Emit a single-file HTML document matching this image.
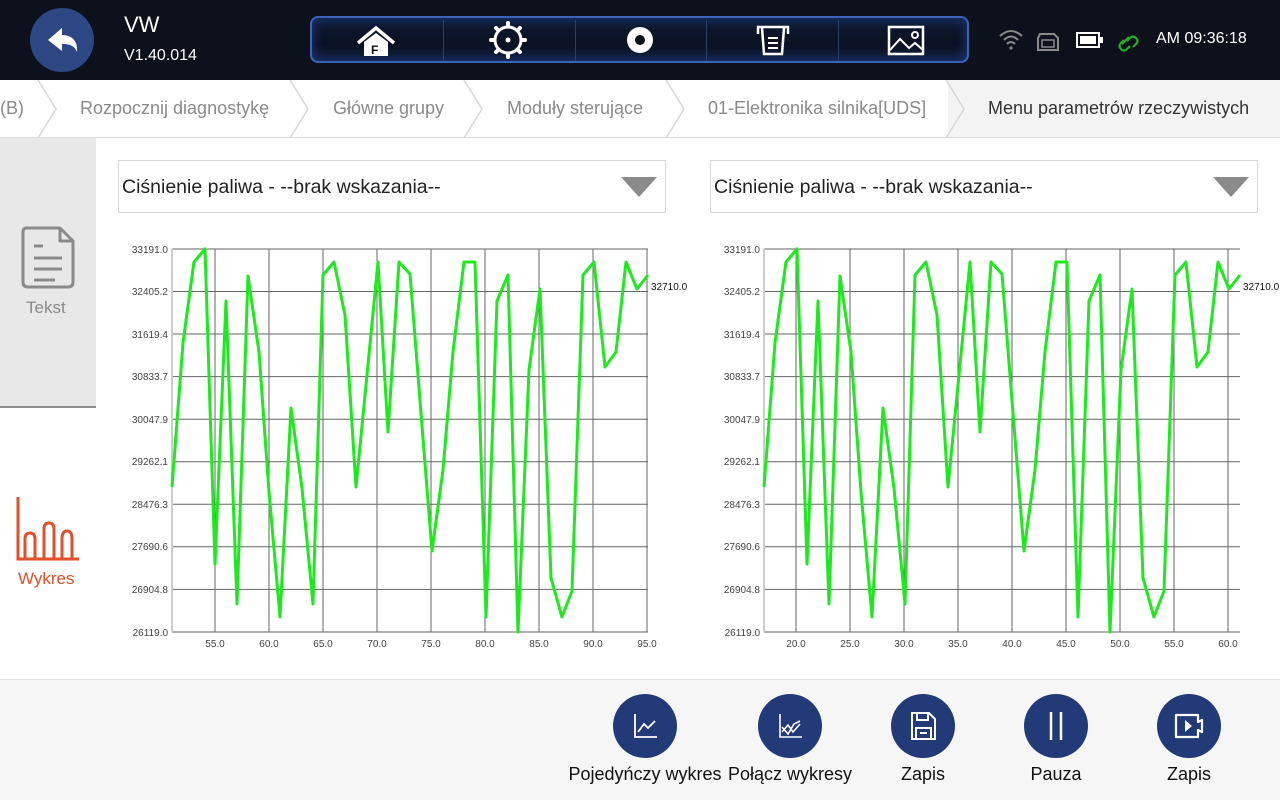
<!DOCTYPE html>
<html><head><meta charset="utf-8"><style>
*{margin:0;padding:0;box-sizing:border-box}
body{width:1280px;height:800px;overflow:hidden;background:#fff;font-family:"Liberation Sans",sans-serif;position:relative}
.hdr{position:absolute;left:0;top:0;width:1280px;height:80px;background:#0c111c}
.back{position:absolute;left:30px;top:8px;width:64px;height:64px;border-radius:50%;background:#2d4785}
.t1{position:absolute;left:124px;top:12px;color:#fff;font-size:22px}
.t2{position:absolute;left:124px;top:47px;color:#fff;font-size:16px}
.nav{position:absolute;left:310px;top:16px;width:659px;height:47px;border:2px solid #3a64b8;border-radius:8px;background:linear-gradient(#0f1a33,#0b1222 60%,#101c38);box-shadow:inset 0 0 12px #1d3b80}
.nav .sep{position:absolute;top:2px;width:1px;height:41px;background:#2c3f66}
.stat{position:absolute;top:30px;color:#fff;font-size:16px;left:1156px}
.bc{position:absolute;left:0;top:80px;width:1280px;height:58px;background:#fff;border-bottom:1px solid #ddd}
.bc span{position:absolute;top:18px;font-size:18px;color:#8a8a8a}
.side1{position:absolute;left:0;top:138px;width:96px;height:270px;background:#e8e8e8;border-bottom:2px solid #8c8c8c}
.dd{position:absolute;top:160px;height:53px;border:1px solid #d8d8d8;background:#fff;font-size:19.5px;color:#222;padding:15px 0 0 3px}
.tri{position:absolute;right:8px;top:16px;width:0;height:0;border-left:18px solid transparent;border-right:18px solid transparent;border-top:20px solid #8a8a8a}
.bot{position:absolute;left:0;top:679px;width:1280px;height:121px;background:#f6f6f6;border-top:1px solid #e0e0e0}
.btn{position:absolute;top:694px;width:64px;height:64px;border-radius:50%;background:#233a78}
.bl{position:absolute;top:764px;font-size:18px;color:#111;text-align:center;width:170px}
</style></head><body>
<div class="hdr">
 <div class="back"><svg width="64" height="64"><path d="M18 32 L32 20 L32 27 C42 27 48 33 47 44 C44 37 39 36 32 36 L32 43 Z" fill="#fff"/></svg></div>
 <div class="t1">VW</div><div class="t2">V1.40.014</div>
 <div class="nav">
  <div class="sep" style="left:131px"></div><div class="sep" style="left:263px"></div><div class="sep" style="left:394px"></div><div class="sep" style="left:526px"></div>
  <svg width="655" height="43" style="position:absolute;left:0;top:0">
   <path d="M46 25 L64 10 L82 25" stroke="#fff" stroke-width="3.5" fill="none"/>
   <path d="M52 24 L64 15 L76 24 L76 38 L52 38 Z" fill="#fff"/>
   <text x="59" y="36" font-size="12" font-weight="bold" fill="#0c111c" font-family="Liberation Sans">F</text>
   <g stroke="#fff" stroke-width="4" stroke-linecap="round">
    <path d="M196 5v3M196 36v3M179 22h3M210 22h3M184 10l2 2M206 32l2 2M184 34l2-2M206 12l2-2"/>
   </g>
   <circle cx="196" cy="22" r="13" fill="none" stroke="#fff" stroke-width="3"/>
   <circle cx="196" cy="22" r="2.5" fill="#fff"/>
   <circle cx="328" cy="22" r="13" fill="#fff"/><circle cx="328" cy="22" r="5" fill="#0c111c"/>
   <path d="M446 16 L446 9 L476 9 L476 16 M450 10 L452 36 L470 36 L472 10" stroke="#fff" stroke-width="2.5" fill="none"/>
   <path d="M456 20 H466 M456 25 H466 M456 30 H466" stroke="#fff" stroke-width="2"/>
   <rect x="577" y="9" width="34" height="27" fill="none" stroke="#fff" stroke-width="2.5"/>
   <path d="M578 32 L588 21 L597 30 L603 25 L611 32" stroke="#fff" stroke-width="2" fill="none"/>
   <circle cx="603" cy="17" r="3" fill="none" stroke="#fff" stroke-width="2"/>
  </svg>
 </div>
 <svg width="150" height="30" style="position:absolute;left:996px;top:26px">
  <path d="M4 10 Q15 0 26 10 M8 14 Q15 7 22 14 M11 18 Q15 14 19 18" stroke="#8a8a8a" stroke-width="2" fill="none"/><circle cx="15" cy="22" r="1.6" fill="#8a8a8a"/>
  <path d="M44 8 L58 8 L62 12 L62 24 L42 24 L42 12 Z" stroke="#8a8a8a" stroke-width="2" fill="none"/><rect x="46" y="14" width="12" height="7" fill="none" stroke="#8a8a8a" stroke-width="1.5"/>
  <rect x="81" y="7" width="22" height="14" fill="none" stroke="#fff" stroke-width="2"/><rect x="84" y="10" width="16" height="8" fill="#fff"/><rect x="104" y="11" width="3" height="6" fill="#fff"/>
  <path d="M126 18 L133 11 M128 14 L125 17 Q122 20 125 23 Q128 26 131 23 L134 20 M131 15 L134 12 Q137 9 140 12 Q143 15 140 18 L137 21" stroke="#22b022" stroke-width="2.2" fill="none"/>
 </svg>
 <div class="stat">AM 09:36:18</div>
</div>
<div class="bc">
 <div style="position:absolute;left:948px;top:0;width:332px;height:57px;background:#f3f3f3"></div>
 <svg width="1280" height="58" style="position:absolute;left:0;top:0">
  <path d="M38 0 L56 29 L38 58 M290 0 L308 29 L290 58 M464 0 L482 29 L464 58 M666 0 L684 29 L666 58 M946 0 L964 29 L946 58" stroke="#d8d8d8" stroke-width="1.5" fill="none"/>
 </svg>
 <span style="left:0">(B)</span>
 <span style="left:80px">Rozpocznij diagnostykę</span>
 <span style="left:333px">Główne grupy</span>
 <span style="left:507px">Moduły sterujące</span>
 <span style="left:708px">01-Elektronika silnika[UDS]</span>
 <span style="left:988px;color:#333">Menu parametrów rzeczywistych</span>
</div>
<div class="side1">
 <svg width="96" height="100" style="position:absolute;left:0;top:86px">
  <path d="M27 4 L60 4 L73 17 L73 58 Q73 63 68 63 L28 63 Q23 63 23 58 L23 8 Q23 4 27 4 Z M60 4 L60 17 L73 17" stroke="#8a8a8a" stroke-width="3" fill="none" stroke-linejoin="round"/>
  <path d="M34 22 H43 M34 34 H62 M34 45 H62 M34 56 H55" stroke="#8a8a8a" stroke-width="3"/>
 </svg>
 <div style="position:absolute;left:26px;top:160px;font-size:17px;color:#8a8a8a">Tekst</div>
</div>
<svg width="96" height="70" style="position:absolute;left:0;top:495px">
 <path d="M18 2 V64 H79 M25 64 V44 Q25 38 30 38 Q35 38 35 44 V64 M44 64 V34 Q44 28 49 28 Q54 28 54 34 V64 M62 64 V44 Q62 36 67 36 Q72 36 72 44 V64" stroke="#e0502a" stroke-width="3" fill="none"/>
</svg>
<div style="position:absolute;left:18px;top:569px;font-size:17px;color:#e0502a">Wykres</div>

<div class="dd" style="left:118px;width:548px">Ciśnienie paliwa - --brak wskazania--<div class="tri"></div></div>
<div class="dd" style="left:710px;width:548px">Ciśnienie paliwa - --brak wskazania--<div class="tri"></div></div>

<svg width="1280" height="800" style="position:absolute;left:0;top:0" font-family="Liberation Sans" font-size="10" fill="#444">
 <defs>
  <g id="grid">
   <path d="M172 249V632M172 249H648M172 291.5H648M172 334H648M172 376.6H648M172 419.2H648M172 461.7H648M172 504.3H648M172 546.8H648M172 589.4H648M172 632H648" stroke="#666" stroke-width="1"/>
   <path d="M172 249V632" stroke="#ccc" stroke-width="2"/>
  </g>
  <polyline id="ln" fill="none" stroke="#1ee81e" stroke-width="3" stroke-linejoin="round" points="172,487 183,343 194,262 205,249 215,564 226,301 237,604 248,276 259,352 269,492 280,617 291,408 302,488 313,604 323,275 334,262 345,315 356,487 367,375 378,262 388,432 399,262 410,274 421,413 432,551 443,470 453,352 464,262 475,262 486,617 497,301 508,275 518,632 529,370 540,289 551,578 562,617 572,591 583,275 594,262 605,367 616,352 626,262 637,289 648,275"/>
 </defs>
 <use href="#grid"/>
 <use href="#grid" transform="translate(592,0)"/>
 <path d="M215 249V632M269 249V632M323 249V632M377 249V632M431 249V632M485 249V632M539 249V632M593 249V632M647 249V632" stroke="#666"/>
 <path d="M796 249V632M850 249V632M904 249V632M958 249V632M1012 249V632M1066 249V632M1120 249V632M1174 249V632M1228 249V632" stroke="#666"/>
 <use href="#ln"/>
 <use href="#ln" transform="translate(592,0)"/>
 <g text-anchor="end">
  <text x="168" y="253">33191.0</text><text x="168" y="295">32405.2</text><text x="168" y="338">31619.4</text><text x="168" y="380">30833.7</text><text x="168" y="423">30047.9</text><text x="168" y="465">29262.1</text><text x="168" y="508">28476.3</text><text x="168" y="550">27690.6</text><text x="168" y="593">26904.8</text><text x="168" y="636">26119.0</text>
  <text x="760" y="253">33191.0</text><text x="760" y="295">32405.2</text><text x="760" y="338">31619.4</text><text x="760" y="380">30833.7</text><text x="760" y="423">30047.9</text><text x="760" y="465">29262.1</text><text x="760" y="508">28476.3</text><text x="760" y="550">27690.6</text><text x="760" y="593">26904.8</text><text x="760" y="636">26119.0</text>
 </g>
 <g text-anchor="middle">
  <text x="215" y="647">55.0</text><text x="269" y="647">60.0</text><text x="323" y="647">65.0</text><text x="377" y="647">70.0</text><text x="431" y="647">75.0</text><text x="485" y="647">80.0</text><text x="539" y="647">85.0</text><text x="593" y="647">90.0</text><text x="647" y="647">95.0</text>
  <text x="796" y="647">20.0</text><text x="850" y="647">25.0</text><text x="904" y="647">30.0</text><text x="958" y="647">35.0</text><text x="1012" y="647">40.0</text><text x="1066" y="647">45.0</text><text x="1120" y="647">50.0</text><text x="1174" y="647">55.0</text><text x="1228" y="647">60.0</text>
 </g>
 <text x="651" y="290" fill="#111">32710.0</text>
 <text x="1243" y="290" fill="#111">32710.0</text>
</svg>
<div style="position:absolute;left:689px;top:270px;width:20px;height:30px;background:#fff"></div>

<div class="bot"></div>
<div class="btn" style="left:613px"><svg width="64" height="64"><path d="M22 20 V43 H44 M25 38 L31 30 L35 34 L42 27" stroke="#fff" stroke-width="1.8" fill="none"/></svg></div>
<div class="btn" style="left:758px"><svg width="64" height="64"><path d="M22 20 V43 H44 M24 33 L30 40 L36 30 L42 27 M24 38 L30 31 L35 38 L42 30" stroke="#fff" stroke-width="1.6" fill="none"/></svg></div>
<div class="btn" style="left:891px"><svg width="64" height="64"><path d="M21 19 H38 L44 25 V45 H21 Z M26 19 V26 H37 V19 M25 45 V34 H40 V45" stroke="#fff" stroke-width="2" fill="none"/><path d="M29 39 H36" stroke="#fff" stroke-width="2"/></svg></div>
<div class="btn" style="left:1024px"><svg width="64" height="64"><path d="M27 18 V46 M37 18 V46" stroke="#fff" stroke-width="2.5"/></svg></div>
<div class="btn" style="left:1157px"><svg width="64" height="64"><path d="M19 21 H41 V28 L45 26 V38 L41 36 V43 H19 Z" stroke="#fff" stroke-width="2.2" fill="none" stroke-linejoin="round"/><path d="M28 26 L35 32 L28 38 Z" fill="#fff"/></svg></div>
<div class="bl" style="left:560px">Pojedyńczy wykres</div>
<div class="bl" style="left:705px">Połącz wykresy</div>
<div class="bl" style="left:838px">Zapis</div>
<div class="bl" style="left:971px">Pauza</div>
<div class="bl" style="left:1104px">Zapis</div>
</body></html>
